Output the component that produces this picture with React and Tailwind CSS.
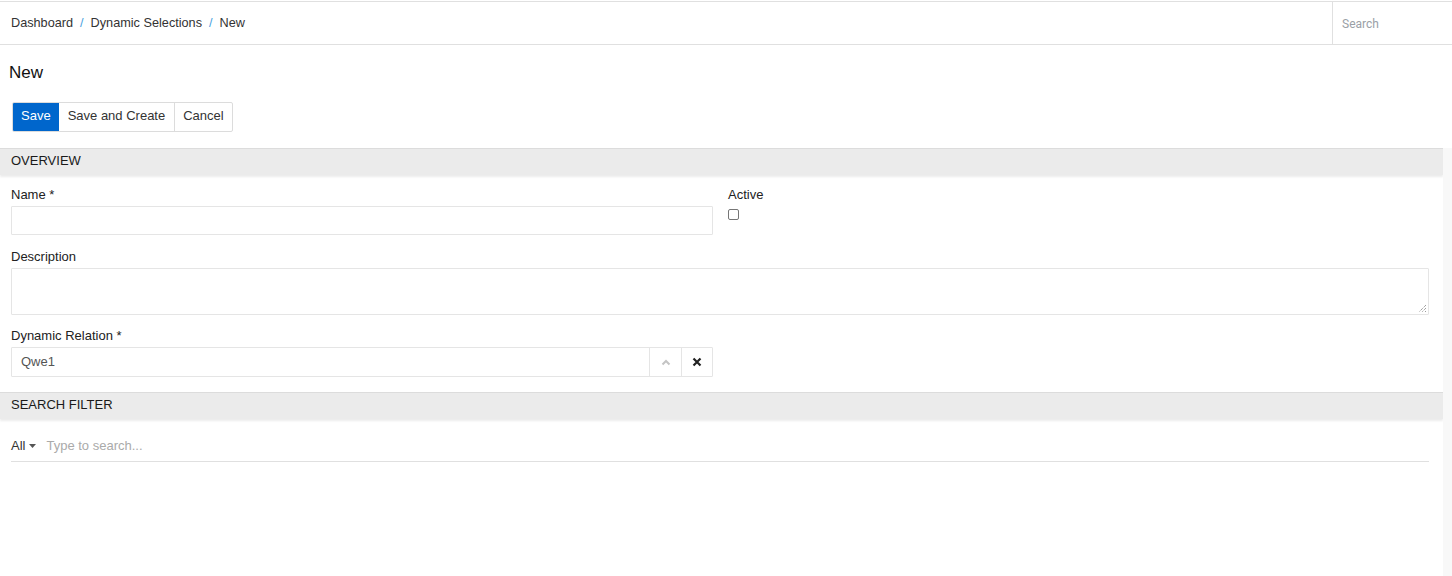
import React from 'react'

// ── Section header bar ───────────────────────────────────────────────────────
function SectionHeader({ title }) {
  return (
    <div className="h-[27px] bg-[#ebebeb] border-t border-[#dcdcdc] shadow-[0_2px_2px_rgba(0,0,0,0.08)] flex items-center px-[11px] pb-[2px] text-[13px] text-[#1a1a1a] uppercase">
      {title}
    </div>
  )
}

function Label({ children }) {
  return <div className="text-[13px] text-[#222] leading-[16px] mb-[3px]">{children}</div>
}

export default function App() {
  return (
    <div className="w-[1452px] h-[576px] bg-white overflow-hidden font-['Liberation_Sans',Arial,sans-serif]">

      {/* ── Top bar ── */}
      <div className="h-[44px] mt-[1px] border-t border-b border-[#e0e0e0] flex items-stretch">
        <div className="flex-1 flex items-center pl-[11px] pt-[2px] text-[12.7px] text-[#333]">
          <span>Dashboard</span>
          <span className="mx-[7px] text-[#4a9fe0]">/</span>
          <span>Dynamic Selections</span>
          <span className="mx-[7px] text-[#4a9fe0]">/</span>
          <span>New</span>
        </div>
        <div className="w-[120px] border-l border-[#e0e0e0] flex items-center pl-[9px] pt-[2px] text-[12px] text-[#9aa0a6] font-['Roboto',sans-serif]">
          Search
        </div>
      </div>

      <div className="flex">
        <div className="w-[1443px]">
          {/* ── Title ── */}
          <div className="pl-[9px] pt-[18px] text-[17px] text-[#111] leading-[20px]">New</div>

          {/* ── Toolbar ── */}
          <div className="pl-[12px] pt-[19px] pb-[16px] flex">
            <div className="flex h-[30px] rounded-[2px] border border-[#dcdcdc] text-[13px] overflow-hidden">
              <button className="px-[8px] pb-[2px] bg-[#0066cc] text-white">Save</button>
              <button className="px-[9px] pb-[2px] text-[#333] border-r border-[#dcdcdc]">Save and Create</button>
              <button className="px-[8px] pb-[2px] text-[#333]">Cancel</button>
            </div>
          </div>

          {/* ── Overview ── */}
          <SectionHeader title="Overview" />
          <div className="pl-[11px] pr-[14px] pt-[12px] pb-[15px]">
            <div className="flex gap-[15px]">
              <div className="w-[702px]">
                <Label>Name *</Label>
                <div className="h-[29px] border border-[#e5e5e5] rounded-[1px]" />
              </div>
              <div>
                <Label>Active</Label>
                <div className="mt-[6px] w-[11px] h-[11px] border border-[#767676] rounded-[2px] bg-white" />
              </div>
            </div>

            <div className="mt-[14px]">
              <Label>Description</Label>
              <div className="relative h-[47px] border border-[#e5e5e5] rounded-[1px]">
                <svg className="absolute right-[1px] bottom-[1px]" width="9" height="9" viewBox="0 0 9 9">
                  <path d="M8 1L1 8M8 4L4 8M8 7L7 8" stroke="#777" strokeWidth="1" strokeDasharray="1 1" />
                </svg>
              </div>
            </div>

            <div className="mt-[13px] w-[702px]">
              <Label>Dynamic Relation *</Label>
              <div className="h-[30px] border border-[#e5e5e5] rounded-[1px] flex">
                <div className="flex-1 flex items-center pl-[9px] text-[13px] text-[#555]">Qwe1</div>
                <div className="w-[32px] border-l border-[#e5e5e5] flex items-center justify-center">
                  <svg width="10" height="7" viewBox="0 0 10 7">
                    <path d="M1.5 5.5L5 2L8.5 5.5" fill="none" stroke="#c4c4c4" strokeWidth="2" />
                  </svg>
                </div>
                <div className="w-[31px] border-l border-[#e5e5e5] flex items-center justify-center">
                  <svg width="10" height="10" viewBox="0 0 10 10">
                    <path d="M1.5 1.5L8.5 8.5M8.5 1.5L1.5 8.5" stroke="#222" strokeWidth="2.2" />
                  </svg>
                </div>
              </div>
            </div>
          </div>

          {/* ── Search filter ── */}
          <SectionHeader title="Search Filter" />
          <div className="pl-[11px] pr-[14px] pt-[11px]">
            <div className="h-[32px] border-b border-[#e0e0e0] flex items-center text-[13px]">
              <span className="text-[#333]">All</span>
              <svg className="ml-[4px] mt-[1px]" width="7" height="4" viewBox="0 0 7 4">
                <path d="M0 0H7L3.5 4Z" fill="#555" />
              </svg>
              <span className="ml-[10px] text-[#aaa]">Type to search...</span>
            </div>
          </div>
        </div>

        {/* right gutter */}
        <div className="w-[9px] mt-[103px] h-[500px] bg-[#f8f8f8]" />
      </div>
    </div>
  )
}
